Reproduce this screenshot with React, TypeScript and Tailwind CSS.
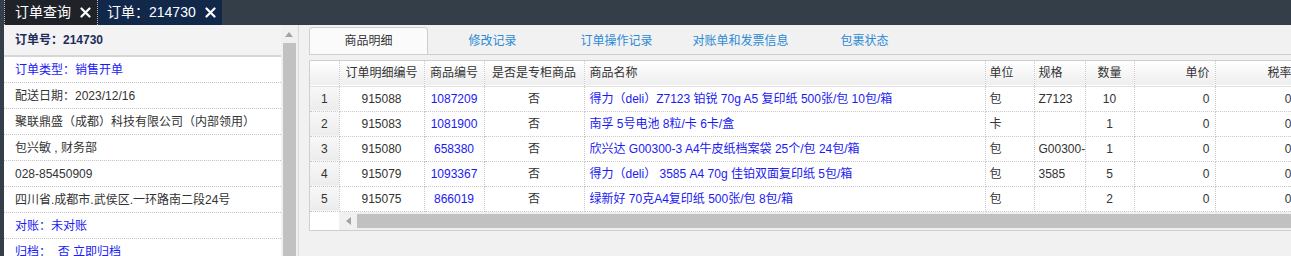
import React from "react";

const font = "font-['Liberation_Sans','Noto_Sans_CJK_SC',sans-serif]";

type Row = {
  no: number;
  detailId: string;
  goodsId: string;
  special: string;
  name: string;
  unit: string;
  spec: string;
  qty: string;
  price: string;
  tax: string;
};

const rows: Row[] = [
  { no: 1, detailId: "915088", goodsId: "1087209", special: "否", name: "得力（deli）Z7123 铂锐 70g A5 复印纸 500张/包 10包/箱", unit: "包", spec: "Z7123", qty: "10", price: "0", tax: "0" },
  { no: 2, detailId: "915083", goodsId: "1081900", special: "否", name: "南孚 5号电池 8粒/卡 6卡/盒", unit: "卡", spec: "", qty: "1", price: "0", tax: "0" },
  { no: 3, detailId: "915080", goodsId: "658380", special: "否", name: "欣兴达 G00300-3 A4牛皮纸档案袋 25个/包 24包/箱", unit: "包", spec: "G00300-3", qty: "1", price: "0", tax: "0" },
  { no: 4, detailId: "915079", goodsId: "1093367", special: "否", name: "得力（deli） 3585 A4 70g 佳铂双面复印纸 5包/箱", unit: "包", spec: "3585", qty: "5", price: "0", tax: "0" },
  { no: 5, detailId: "915075", goodsId: "866019", special: "否", name: "绿新好 70克A4复印纸 500张/包 8包/箱", unit: "包", spec: "", qty: "2", price: "0", tax: "0" },
];

const info: { text: string; blue?: boolean }[] = [
  { text: "订单类型：销售开单", blue: true },
  { text: "配送日期：2023/12/16" },
  { text: "聚联鼎盛（成都）科技有限公司（内部领用）" },
  { text: "包兴敏 , 财务部" },
  { text: "028-85450909" },
  { text: "四川省.成都市.武侯区.一环路南二段24号" },
  { text: "对账：未对账", blue: true },
  { text: "归档：  否 立即归档", blue: true },
];

const tabs = ["商品明细", "修改记录", "订单操作记录", "对账单和发票信息", "包裹状态"];

function Close() {
  return (
    <svg width="11" height="11" viewBox="0 0 11 11" className="ml-[9px]">
      <path d="M1.5 1.5 L9.5 9.5 M9.5 1.5 L1.5 9.5" stroke="white" strokeWidth="2.2" strokeLinecap="round" />
    </svg>
  );
}

const th = "h-[25px] border-r border-dotted border-[#c8c8c8] px-[5px] font-normal text-[#333] whitespace-nowrap overflow-hidden";
const td = "h-[25px] border-r border-b border-dotted border-[#c8c8c8] px-[5px] whitespace-nowrap overflow-hidden";

export default function App() {
  return (
    <div className={`w-[1291px] h-[256px] overflow-hidden flex flex-col text-[12px] ${font}`}>
      {/* top tab bar */}
      <div className="h-[25px] flex bg-[#343e49] pl-[4px] shrink-0">
        <div className="flex items-center h-full w-[94px] bg-[#1f2329] border-x border-dotted border-white/70 pl-[10px] text-white text-[14px]">
          订单查询
          <Close />
        </div>
        <div className="flex items-center h-full w-[124px] bg-[#12284b] pl-[9px] text-white text-[14px]">
          订单：214730
          <Close />
        </div>
      </div>

      <div className="flex flex-1 min-h-0">
        <div className="w-[4px] bg-[#343e49]" />

        {/* left info panel */}
        <div className="w-[277px] bg-white flex flex-col">
          <div className="h-[32px] shrink-0 flex items-center px-[11px] bg-[#f3f3f3] border-b-2 border-[#d6d6d6] font-bold text-[#1d2b5c]">
            订单号：214730
          </div>
          {info.map((r) => (
            <div
              key={r.text}
              className={`h-[26px] shrink-0 flex items-center px-[11px] border-b border-dotted border-[#c4c4c4] whitespace-pre ${r.blue ? "text-[#1a1af2]" : "text-[#333]"}`}
            >
              {r.text}
            </div>
          ))}
        </div>

        {/* vertical scrollbar */}
        <div className="w-[15px] bg-[#f0f0f0] flex flex-col">
          <div className="h-[18px] flex items-center justify-center">
            <svg width="8" height="5" viewBox="0 0 8 5">
              <path d="M0 5 L4 0 L8 5 Z" fill="#a3a3a3" />
            </svg>
          </div>
          <div className="flex-1 ml-[2px] bg-[#c1c1c1]" />
        </div>
        <div className="w-[2px] bg-[#f0f0f0]" />
        <div className="w-px bg-[#d8d8d8]" />

        {/* right panel */}
        <div className="flex-1 min-w-0 bg-[#f1f1f1] pl-[10px] flex flex-col">
          <div className="h-[30px] shrink-0 flex items-end border-b border-[#cfcfcf]">
            {tabs.map((t, i) => (
              <div
                key={t}
                className={`w-[119px] mr-[5px] h-[27px] flex items-center justify-center ${
                  i === 0
                    ? "bg-[#fbfbfb] border border-b-0 border-[#cfcfcf] rounded-t-[4px] text-[#333]"
                    : "text-[#2a8ad4]"
                }`}
              >
                {t}
              </div>
            ))}
          </div>

          <div className="mt-[5px] w-[1000px] border border-[#cfcfcf] bg-white">
            <table className="table-fixed border-collapse w-[1000px]">
              <colgroup>
                <col className="w-[29px]" />
                <col className="w-[85px]" />
                <col className="w-[60px]" />
                <col className="w-[100px]" />
                <col className="w-[401px]" />
                <col className="w-[49px]" />
                <col className="w-[51px]" />
                <col className="w-[49px]" />
                <col className="w-[81px]" />
                <col className="w-[95px]" />
              </colgroup>
              <thead>
                <tr className="bg-gradient-to-b from-white to-[#eeeeee] border-b border-[#e0e0e0]">
                  <th className={th}></th>
                  <th className={`${th} text-center`}>订单明细编号</th>
                  <th className={`${th} text-center`}>商品编号</th>
                  <th className={`${th} text-center`}>是否是专柜商品</th>
                  <th className={`${th} text-left`}>商品名称</th>
                  <th className={`${th} text-left pl-[4px]`}>单位</th>
                  <th className={`${th} text-left pl-[4px]`}>规格</th>
                  <th className={`${th} text-center`}>数量</th>
                  <th className={`${th} text-right`}>单价</th>
                  <th className={`${th} text-right pr-[18px]`}>税率</th>
                </tr>
              </thead>
              <tbody>
                {rows.map((r) => (
                  <tr key={r.no}>
                    <td className={`${td} text-center text-[#333] bg-gradient-to-b from-[#f8f8f8] to-[#ececec]`}>{r.no}</td>
                    <td className={`${td} text-center text-[#333]`}>{r.detailId}</td>
                    <td className={`${td} text-center text-[#1a1af2]`}>{r.goodsId}</td>
                    <td className={`${td} text-center text-[#333]`}>{r.special}</td>
                    <td className={`${td} text-left text-[#1a1af2]`}>{r.name}</td>
                    <td className={`${td} text-left pl-[4px] text-[#333]`}>{r.unit}</td>
                    <td className={`${td} text-left pl-[4px] pr-0 text-[#333] text-clip`}>{r.spec}</td>
                    <td className={`${td} text-center text-[#333]`}>{r.qty}</td>
                    <td className={`${td} text-right text-[#333]`}>{r.price}</td>
                    <td className={`${td} text-right pr-[18px] text-[#333]`}>{r.tax}</td>
                  </tr>
                ))}
              </tbody>
            </table>
            {/* horizontal scrollbar */}
            <div className="h-[18px] flex">
              <div className="w-[29px] bg-white" />
              <div className="flex-1 bg-[#f0f0f0] flex items-center">
                <div className="w-[18px] flex items-center justify-center">
                  <svg width="5" height="8" viewBox="0 0 5 8">
                    <path d="M5 0 L0 4 L5 8 Z" fill="#a3a3a3" />
                  </svg>
                </div>
                <div className="flex-1 h-[14px] bg-[#c1c1c1]" />
              </div>
            </div>
          </div>
        </div>
      </div>
    </div>
  );
}
